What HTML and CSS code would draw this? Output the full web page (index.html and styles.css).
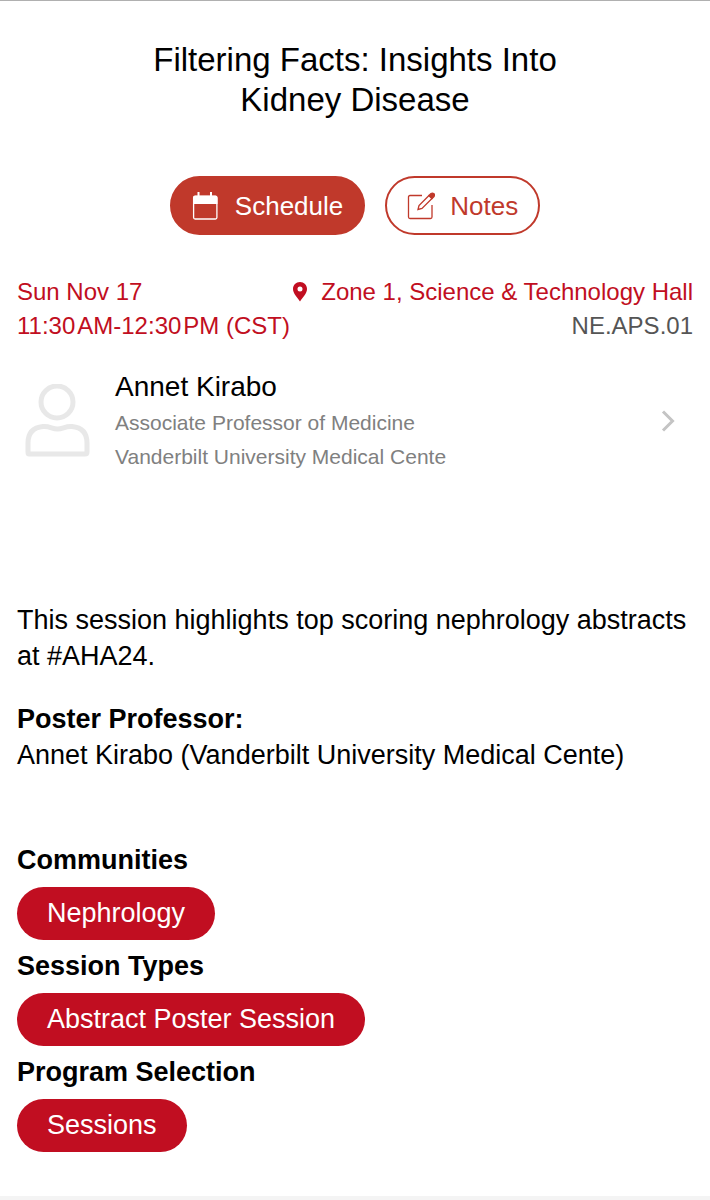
FILE: index.html
```html
<!DOCTYPE html>
<html lang="en">
<head>
<meta charset="utf-8">
<meta name="viewport" content="width=device-width, initial-scale=1">
<title>Filtering Facts: Insights Into Kidney Disease</title>
<link rel="stylesheet" href="styles.css">
</head>
<body>
<main class="session">
  <h1 class="title">Filtering Facts: Insights Into Kidney Disease</h1>

  <div class="actions">
    <button class="action action-filled" type="button">
      <svg class="action-icon" viewBox="0 0 28 28" aria-hidden="true">
        <path d="M1 12V5.500Q1 3.500 3 3.500H5.500V0H7.500V3.500H18V0H20V3.500H23.500Q25.500 3.500 25.500 5.500V12Z" fill="currentColor"/>
        <rect x="1.600" y="4.500" width="23.300" height="22.500" rx="1.500" fill="none" stroke="currentColor" stroke-width="1.300"/>
      </svg>
      Schedule
    </button>
    <button class="action action-outline" type="button">
      <svg class="action-icon" viewBox="0 0 28 28" fill="none" stroke="currentColor" stroke-width="1.300" aria-hidden="true">
        <path d="M15 3.500H3Q1.500 3.500 1.500 5V25Q1.500 26.500 3 26.500H23.500Q25 26.500 25 25V13"/>
        <path d="M11 17.500L12 13.500L22 3.500L25 6.500L15 16.500Z"/>
        <path d="M22 3.500L24 1.500Q25.500 .5 27 1.700Q28 3 27 4.500L25 6.500Z" fill="currentColor"/>
      </svg>
      Notes
    </button>
  </div>

  <div class="details">
    <div class="when">
      <div>Sun Nov 17</div>
      <div>11:30&#8202;AM-12:30&#8202;PM (CST)</div>
    </div>
    <div class="where">
      <div class="place">
        <svg class="pin" viewBox="0 0 14 20" aria-hidden="true">
          <path fill="currentColor" fill-rule="evenodd" d="M7 0C3 0 0 3 0 7C0 11.500 4.500 15.500 7 19.500C9.500 15.500 14 11.500 14 7C14 3 11 0 7 0ZM7 4.500A2.500 2.500 0 1 1 7 9.500A2.500 2.500 0 1 1 7 4.500Z"/>
        </svg>
        Zone 1, Science &amp; Technology Hall
      </div>
      <div class="code">NE.APS.01</div>
    </div>
  </div>

  <a class="person" href="#annet-kirabo">
    <svg class="avatar" viewBox="0 0 66 74" fill="none" stroke="currentColor" stroke-width="5" aria-hidden="true">
      <circle cx="32" cy="18" r="16"/>
      <path d="M4 70Q3 70 3 68V59Q3 44 18 42.500C25 42 27 45 32.500 45C38 45 40 42 47 42.500Q62 44 62 59V68Q62 70 60 70Z" stroke-linejoin="round"/>
    </svg>
    <div class="person-text">
      <div class="person-name">Annet Kirabo</div>
      <div class="person-role">Associate Professor of Medicine</div>
      <div class="person-role">Vanderbilt University Medical Cente</div>
    </div>
    <svg class="chevron" viewBox="0 0 14 22" fill="none" stroke="currentColor" stroke-width="3" aria-hidden="true">
      <path d="M2 1.500L11.500 11L2 20.500"/>
    </svg>
  </a>

  <section class="about">
    <p>This session highlights top scoring nephrology abstracts at #AHA24.</p>
    <h2 class="heading">Poster Professor:</h2>
    <p>Annet Kirabo (Vanderbilt University Medical Cente)</p>
  </section>

  <section class="tags">
    <h2 class="heading">Communities</h2>
    <a class="tag" href="#nephrology">Nephrology</a>
    <h2 class="heading">Session Types</h2>
    <a class="tag" href="#abstract-poster-session">Abstract Poster Session</a>
    <h2 class="heading">Program Selection</h2>
    <a class="tag" href="#sessions">Sessions</a>
  </section>
</main>
<footer class="bottom-bar"></footer>
</body>
</html>
```
FILE: styles.css
```css
* {
  box-sizing: border-box;
}

body {
  margin: 0;
  background: #fff;
  color: #000;
  font-family: "Liberation Sans", Arial, sans-serif;
  font-size: 27px;
  line-height: 36px;
}

h1, h2, p {
  margin: 0;
}

a {
  color: inherit;
  text-decoration: none;
}

.session {
  border-top: 1px solid #b0b0b0;
  padding: 39px 17px 36px;
}

.title {
  max-width: 480px;
  margin: 0 auto;
  font-size: 33px;
  font-weight: 400;
  line-height: 40px;
  text-align: center;
}

.actions {
  display: flex;
  justify-content: center;
  gap: 20px;
  margin-top: 56px;
}

.action {
  display: flex;
  align-items: center;
  gap: 15px;
  height: 59px;
  padding: 0 20px;
  border: 2px solid #c0392b;
  border-radius: 30px;
  font: inherit;
  font-size: 26px;
}

.action-filled {
  background: #c0392b;
  color: #fff;
}

.action-outline {
  background: #fff;
  color: #c0392b;
}

.action-icon {
  width: 28px;
  height: 28px;
}

.details {
  display: flex;
  justify-content: space-between;
  margin-top: 40px;
  color: #c10e21;
  font-size: 24px;
  line-height: 34px;
  white-space: nowrap;
}

.where {
  text-align: right;
}

.place {
  display: flex;
  align-items: center;
  justify-content: flex-end;
  gap: 14px;
}

.pin {
  width: 14px;
  height: 20px;
}

.code {
  color: #555;
}

.person {
  display: flex;
  align-items: center;
  margin-top: 25px;
  padding: 0 18px 0 8px;
}

.avatar {
  width: 66px;
  height: 74px;
  color: #e8e8e8;
}

.person-text {
  flex: 1;
  padding-left: 24px;
}

.person-name {
  font-size: 28px;
  line-height: 38px;
}

.person-role {
  color: #808080;
  font-size: 21px;
  line-height: 34px;
}

.chevron {
  width: 14px;
  height: 22px;
  color: #c4c4c4;
}

.about {
  margin-top: 128px;
}

.heading {
  font-size: 27px;
  font-weight: 700;
  line-height: 36px;
}

.about .heading {
  margin-top: 27px;
}

.tags {
  display: flex;
  flex-direction: column;
  align-items: flex-start;
  margin-top: 69px;
}

.tag {
  margin: 9px 0 8px;
  padding: 0 30px;
  border-radius: 27px;
  background: #c10e21;
  color: #fff;
  line-height: 53px;
}

.bottom-bar {
  height: 5px;
  background: #f4f4f4;
}
```
